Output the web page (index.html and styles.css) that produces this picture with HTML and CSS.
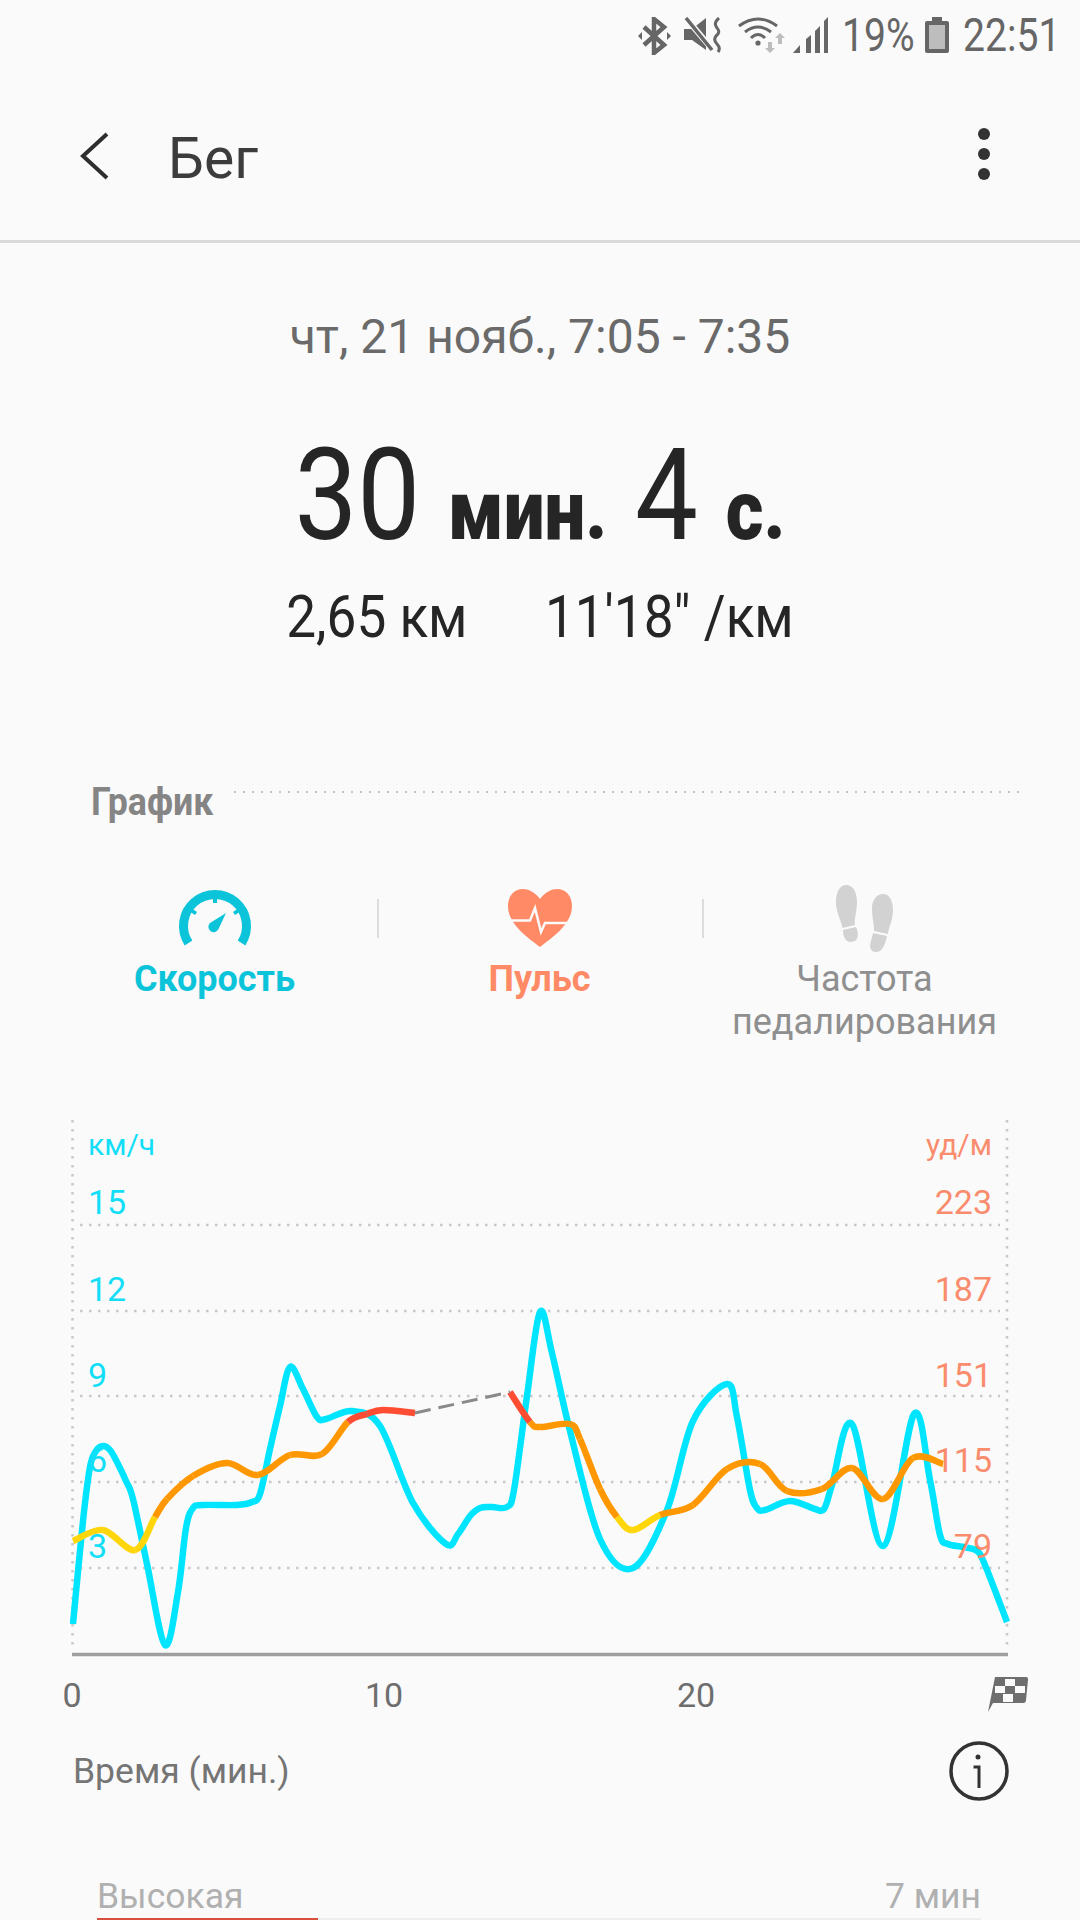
FILE: index.html
```html
<!DOCTYPE html>
<html lang="ru">
<head>
    <meta charset="UTF-8">
    <meta name="viewport" content="width=device-width, initial-scale=1.0">
    <title>Бег</title>
    <link rel="stylesheet" href="styles.css">
</head>
<body>
    <div class="status-bar">
        <svg class="icon-bt" width="33" height="38" viewBox="0 0 33 38">
            <path d="M6 10 26 28 16 36V2L26 10 6 28" fill="none" stroke="#666" stroke-width="4.5"/>
            <path d="M0 19 4 15V23ZM33 19 29 15V23Z" fill="#666"/>
        </svg>
        <svg class="icon-mute" width="38" height="36" viewBox="0 0 38 36">
            <path d="M0 12H8L22 1V33L8 23H0Z" fill="#666"/>
            <path d="M1 0 29 33" stroke="#fafafa" stroke-width="6"/>
            <path d="M2 1 28 33" stroke="#666" stroke-width="3.5"/>
            <path d="M35 1Q29 6 33 11 37 15 32 19 29 23 33 27 37 31 34 35" fill="none" stroke="#666" stroke-width="3"/>
        </svg>
        <svg class="icon-wifi" width="49" height="36" viewBox="0 0 49 36">
            <path d="M1 9Q20-5 39 9M7 15Q20 5 33 15M13 21Q20 14 27 21" fill="none" stroke="#666" stroke-width="3"/>
            <circle cx="20" cy="26" r="2.6" fill="#666"/>
            <path d="M30 25H34V31H37L32 36 27 31H30ZM40 27H44V21H47L42 16 37 21H40Z" fill="#bdbdbd"/>
        </svg>
        <svg class="icon-signal" width="35" height="36" viewBox="0 0 35 36">
            <path d="M0 36 7 28V36ZM13 36V22L18 18V36ZM22 36V14L27 9V36ZM31 36V4L35 0V36Z" fill="#666"/>
        </svg>
        <span class="status-text status-battery">19%</span>
        <svg class="icon-battery" width="24" height="36" viewBox="0 0 24 36">
            <path d="M7 0H17V4H22Q24 4 24 6V34Q24 36 22 36H2Q0 36 0 34V6Q0 4 2 4H7Z" fill="#666"/>
            <rect x="4" y="8" width="16" height="24" fill="#bdbdbd"/>
        </svg>
        <span class="status-text status-time">22:51</span>
    </div>

    <header class="app-bar">
        <svg class="back" width="30" height="50" viewBox="0 0 30 50">
            <path d="M27 3 3 25 27 47" fill="none" stroke="#2e2e2e" stroke-width="4"/>
        </svg>
        <div class="app-title">Бег</div>
        <div class="more"><span></span><span></span><span></span></div>
    </header>

    <div class="date">чт, 21 нояб., 7:05 - 7:35</div>
    <div class="duration">30 <b>мин.</b> 4 <b>с.</b></div>
    <div class="stats"><span>2,65 км</span><span>11'18" /км</span></div>

    <div class="section-head">
        <div class="section-title">График</div>
        <div class="section-line"></div>
    </div>

    <div class="tabs">
        <div class="tab tab-speed">
            <svg class="tab-icon" width="90" height="78" viewBox="170 880 90 78">
                <path d="M188.500 943A31.500 31.500 0 1 1 241.500 943" fill="none" stroke="#0cc4da" stroke-width="9"/>
                <path d="M213 897H217V903H213ZM191 908 197 912 195 915 189 911ZM239 908 233 912 235 915 241 911Z" fill="#0cc4da"/>
                <path d="M226 913 218.500 929A5.300 5.300 0 1 1 210 923Z" fill="#0cc4da"/>
            </svg>
            <div class="tab-label">Скорость</div>
        </div>
        <div class="tab tab-pulse">
            <svg class="tab-icon" width="90" height="78" viewBox="495 880 90 78">
                <path d="M540 899C535 892 528 889 523 889 514 889 508 896 508 906 508 925 530 939 540 947 550 939 572 925 572 906 572 896 566 889 557 889 552 889 545 892 540 899Z" fill="#ff8a65"/>
                <path d="M508 920.500H530L535 908 541 932 545 923H572" fill="none" stroke="#fafafa" stroke-width="2.500"/>
            </svg>
            <div class="tab-label">Пульс</div>
        </div>
        <div class="tab tab-cadence">
            <svg class="tab-icon" width="90" height="78" viewBox="820 880 90 78">
                <path d="M846 885C853 885 857 892 857 902 857 912 854 918 855 925L842.500 928C841 920 836 912 836 902 836 892 840 885 846 885ZM843 930 856 927C859 933 859 942 851 942 845 942 843 936 843 930ZM883 894C889 894 893 900 893 910 893 920 889 926 888 934L874 931C874 922 872 918 872 908 872 900 877 894 883 894ZM873 933 887 936C885 944 883 952 876 952 870 952 869 946 871 941Z" fill="#d2d2d2"/>
            </svg>
            <div class="tab-label">Частота педалирования</div>
        </div>
    </div>

    <svg class="chart" width="1080" height="610" viewBox="0 1110 1080 610">
        <g class="grid">
            <path d="M72.500 1120V1650M1007 1120V1650"/>
            <path d="M80 1225H1000M80 1311H1000M80 1396H1000M80 1482H1000M80 1568H1000"/>
        </g>
        <path class="axis" d="M72 1654.500H1008"/>
        <path class="line line-speed" id="speed-line"/>
        <g id="pulse-lines"></g>
        <path class="line-gap" d="M415 1413 510 1392"/>

        <g class="labels-speed">
            <text class="unit" x="88" y="1155">км/ч</text>
            <text x="88" y="1214">15</text>
            <text x="88" y="1301">12</text>
            <text x="88" y="1387">9</text>
            <text x="88" y="1472">6</text>
            <text x="88" y="1558">3</text>
        </g>
        <g class="labels-pulse">
            <text class="unit" x="992" y="1155">уд/м</text>
            <text x="992" y="1214">223</text>
            <text x="992" y="1301">187</text>
            <text x="992" y="1387">151</text>
            <text x="992" y="1472">115</text>
            <text x="992" y="1558">79</text>
        </g>
        <g class="labels-time">
            <text x="72" y="1707">0</text>
            <text x="384" y="1707">10</text>
            <text x="696" y="1707">20</text>
        </g>
        <path d="M995 1677H1026Q1028.500 1677 1028 1680L1026 1700Q1026 1703 1023 1703H993L988 1712Z" fill="#6e6e6e"/>
        <path d="M1005 1679H1015V1686H1005ZM995 1686H1005V1693H995ZM1015 1686H1025V1693H1015ZM1003 1694H1013V1702H1003Z" fill="#fafafa"/>
    </svg>

    <div class="time-row">
        <div class="time-label">Время (мин.)</div>
        <svg class="info" width="60" height="60" viewBox="0 0 60 60">
            <circle cx="30" cy="30" r="28" fill="none" stroke="#333" stroke-width="3.500"/>
            <circle cx="29" cy="16" r="2.500" fill="#333"/>
            <path d="M24.500 26H30V47" fill="none" stroke="#333" stroke-width="3"/>
        </svg>
    </div>

    <div class="zone">
        <div class="zone-row"><span>Высокая</span><span>7 мин</span></div>
        <div class="zone-track"><div class="zone-fill" style="width: 25%"></div></div>
    </div>

    <script src="chart.js"></script>
</body>
</html>
```

FILE: styles.css
```css
* {
    margin: 0;
    padding: 0;
    box-sizing: border-box;
}

html, body {
    height: 1920px;
    overflow: hidden;
}

body {
    font-family: Roboto, "Noto Sans", sans-serif;
    background-color: #fafafa;
    color: #252525;
}

.status-bar {
    display: flex;
    align-items: flex-start;
    height: 72px;
    padding: 17px 0 0 638px;
    color: #666;
}

.icon-mute {
    margin-left: 13px;
}

.icon-wifi {
    margin-left: 16px;
}

.icon-signal {
    margin-left: 6px;
}

.icon-battery {
    margin-left: 13px;
}

.status-text {
    font-size: 46px;
    line-height: 36px;
    white-space: nowrap;
    transform: scaleX(0.85);
    transform-origin: left top;
}

.status-battery {
    width: 70px;
    margin-left: 14px;
}

.status-time {
    width: 92px;
    margin-left: 14px;
}

.app-bar {
    display: flex;
    align-items: center;
    height: 171px;
    padding-left: 80px;
    padding-right: 90px;
    border-bottom: 3px solid #dadada;
}

.app-title {
    flex: 1;
    font-size: 57px;
    color: #3c3c3c;
    margin-left: 58px;
    padding-top: 4px;
}

.more {
    display: flex;
    flex-direction: column;
    gap: 8px;
    margin-top: -4px;
}

.more span {
    width: 12px;
    height: 12px;
    border-radius: 50%;
    background-color: #333;
}

.date {
    margin-top: 64px;
    font-size: 48px;
    line-height: 60px;
    text-align: center;
    color: #6a6a6a;
}

.duration {
    margin-top: 58px;
    font-size: 128px;
    line-height: 140px;
    text-align: center;
    white-space: nowrap;
    transform: scaleX(0.875);
}

.duration b {
    font-size: 83px;
    font-weight: 900;
    line-height: 1;
}

.stats {
    display: flex;
    justify-content: center;
    gap: 86px;
    margin-top: 17px;
    font-size: 59px;
    line-height: 70px;
    transform: scaleX(0.9);
}

.section-head {
    display: flex;
    align-items: flex-start;
    margin-top: 128px;
    padding: 0 61px 0 91px;
}

.section-title {
    width: 143px;
    font-size: 38px;
    line-height: 44px;
    font-weight: 700;
    color: #858585;
    transform: scaleX(0.94);
    transform-origin: left center;
}

.section-line {
    flex: 1;
    margin-top: 11px;
    height: 2px;
    background-image: linear-gradient(to right, #c4c4c4 2px, transparent 2px);
    background-size: 9px 2px;
}

.tabs {
    display: grid;
    grid-template-columns: repeat(3, 325px);
    margin-top: 56px;
    padding-left: 52px;
    height: 164px;
}

.tab {
    position: relative;
    text-align: center;
}

.tab + .tab::before {
    content: "";
    position: absolute;
    left: 0;
    top: 19px;
    width: 2px;
    height: 39px;
    background-color: #dcdcdc;
}

.tab-icon {
    display: block;
    margin: 0 auto;
}

.tab-label {
    margin: 0 auto;
    font-size: 36px;
    line-height: 43px;
    color: #8f8f8f;
}

.tab-speed .tab-label {
    font-weight: 700;
    color: #0cc4da;
}

.tab-pulse .tab-label {
    font-weight: 700;
    color: #ff8a65;
}

.tab-cadence .tab-label {
    width: 280px;
}

.chart {
    display: block;
    margin-top: 66px;
}

.chart text {
    font-size: 34px;
}

.grid path {
    fill: none;
    stroke: #c8c8c8;
    stroke-width: 2.5;
    stroke-dasharray: 2.5 6.5;
}

.axis {
    fill: none;
    stroke: #9e9e9e;
    stroke-width: 3.5;
}

.line {
    fill: none;
    stroke-width: 6.5;
}

.line-speed {
    stroke: #00e5ff;
}

.line-low {
    stroke: #ffd60a;
}

.line-mid {
    stroke: #ff9800;
}

.line-high {
    stroke: #ff4d33;
}

.line-gap {
    fill: none;
    stroke: #8a8a8a;
    stroke-width: 3;
    stroke-dasharray: 16 8;
}

.labels-speed text {
    fill: #12def8;
}

.labels-pulse text {
    fill: #fa8c6e;
    text-anchor: end;
}

.labels-time text {
    fill: #6e6e6e;
    text-anchor: middle;
}

.chart .unit {
    font-size: 30px;
}

.time-row {
    display: flex;
    justify-content: space-between;
    align-items: center;
    margin-top: 21px;
    padding: 0 71px 0 73px;
}

.time-label {
    font-size: 35.500px;
    color: #757575;
}

.zone {
    margin-top: 73px;
    padding: 0 99px 0 97px;
}

.zone-row {
    display: flex;
    justify-content: space-between;
    font-size: 35.500px;
    line-height: 44px;
    color: #b0b0b0;
}

.zone-track {
    height: 8px;
    background-color: #eeeeee;
}

.zone-fill {
    height: 100%;
    background-color: #d8503c;
}
```

FILE: chart.js
```js
// points read off in page coordinates, svg viewBox uses the same numbers
const speed = [
    [73,1624],[83,1521],[90,1467],[96,1451],[103,1446],[110,1450],[118,1464],[126,1481],[133,1499],[147,1564],[165,1645],[178,1592],
    [186,1528],[193,1508],[203,1505],[237,1505],[252,1502],[260,1494],[270,1449],[280,1406],[290,1367],[303,1389],[317,1417],[326,1419],
    [352,1411],[380,1426],[413,1503],[446,1544],[458,1534],[470,1516],[480,1508],[492,1507],[507,1507],[514,1490],[527,1396],[540,1312],
    [552,1353],[570,1431],[600,1539],[633,1568],[667,1510],[693,1421],[727,1384],[737,1417],
    [750,1490],[757,1508],[765,1510],[790,1501],[815,1509],[824,1509],[832,1485],[852,1424],[883,1546],[914,1414],
    [930,1480],[940,1535],[948,1544],[963,1547],[977,1551],[985,1565],[1007,1622]
];

const pulseRuns = [
    [
        { p: [73,1541], c: 'low' }, { p: [103,1530], c: 'low' }, { p: [135,1550], c: 'low' }, { p: [155,1517], c: 'mid' },
        { p: [167,1499], c: 'mid' }, { p: [193,1476], c: 'mid' }, { p: [227,1463], c: 'mid' }, { p: [258,1475], c: 'mid' },
        { p: [290,1455], c: 'mid' }, { p: [322,1454], c: 'mid' }, { p: [348,1422], c: 'high' }, { p: [367,1414], c: 'high' },
        { p: [383,1410], c: 'high' }, { p: [415,1413], c: 'high' }
    ],
    [
        { p: [510,1392], c: 'high' }, { p: [530,1422], c: 'mid' }, { p: [540,1427], c: 'mid' }, { p: [570,1424], c: 'mid' },
        { p: [580,1439], c: 'mid' }, { p: [600,1489], c: 'mid' }, { p: [617,1517], c: 'low' }, { p: [633,1530], c: 'low' },
        { p: [660,1515], c: 'mid' }, { p: [693,1505], c: 'mid' }, { p: [727,1469], c: 'mid' }, { p: [760,1464], c: 'mid' },
        { p: [787,1491], c: 'mid' }, { p: [822,1489], c: 'mid' }, { p: [852,1468], c: 'mid' }, { p: [883,1499], c: 'mid' },
        { p: [913,1458], c: 'mid' }, { p: [943,1464], c: 'mid' }
    ]
];

// catmull-rom piece from point i to point i+1
function curve(pts, i) {
    const p0 = pts[Math.max(i - 1, 0)];
    const p1 = pts[i];
    const p2 = pts[i + 1];
    const p3 = pts[Math.min(i + 2, pts.length - 1)];
    const c1 = [p1[0] + (p2[0] - p0[0]) / 6, p1[1] + (p2[1] - p0[1]) / 6];
    const c2 = [p2[0] - (p3[0] - p1[0]) / 6, p2[1] - (p3[1] - p1[1]) / 6];
    return `C${c1[0]} ${c1[1]} ${c2[0]} ${c2[1]} ${p2[0]} ${p2[1]}`;
}

let d = `M${speed[0][0]} ${speed[0][1]}`;
for (let i = 0; i < speed.length - 1; i++) {
    d += curve(speed, i);
}
document.getElementById('speed-line').setAttribute('d', d);

const pulseGroup = document.getElementById('pulse-lines');
pulseRuns.forEach(run => {
    const pts = run.map(r => r.p);
    for (let i = 0; i < pts.length - 1; i++) {
        const piece = document.createElementNS('http://www.w3.org/2000/svg', 'path');
        piece.setAttribute('class', `line line-${run[i].c}`);
        piece.setAttribute('d', `M${pts[i][0]} ${pts[i][1]}${curve(pts, i)}`);
        pulseGroup.appendChild(piece);
    }
});
```
